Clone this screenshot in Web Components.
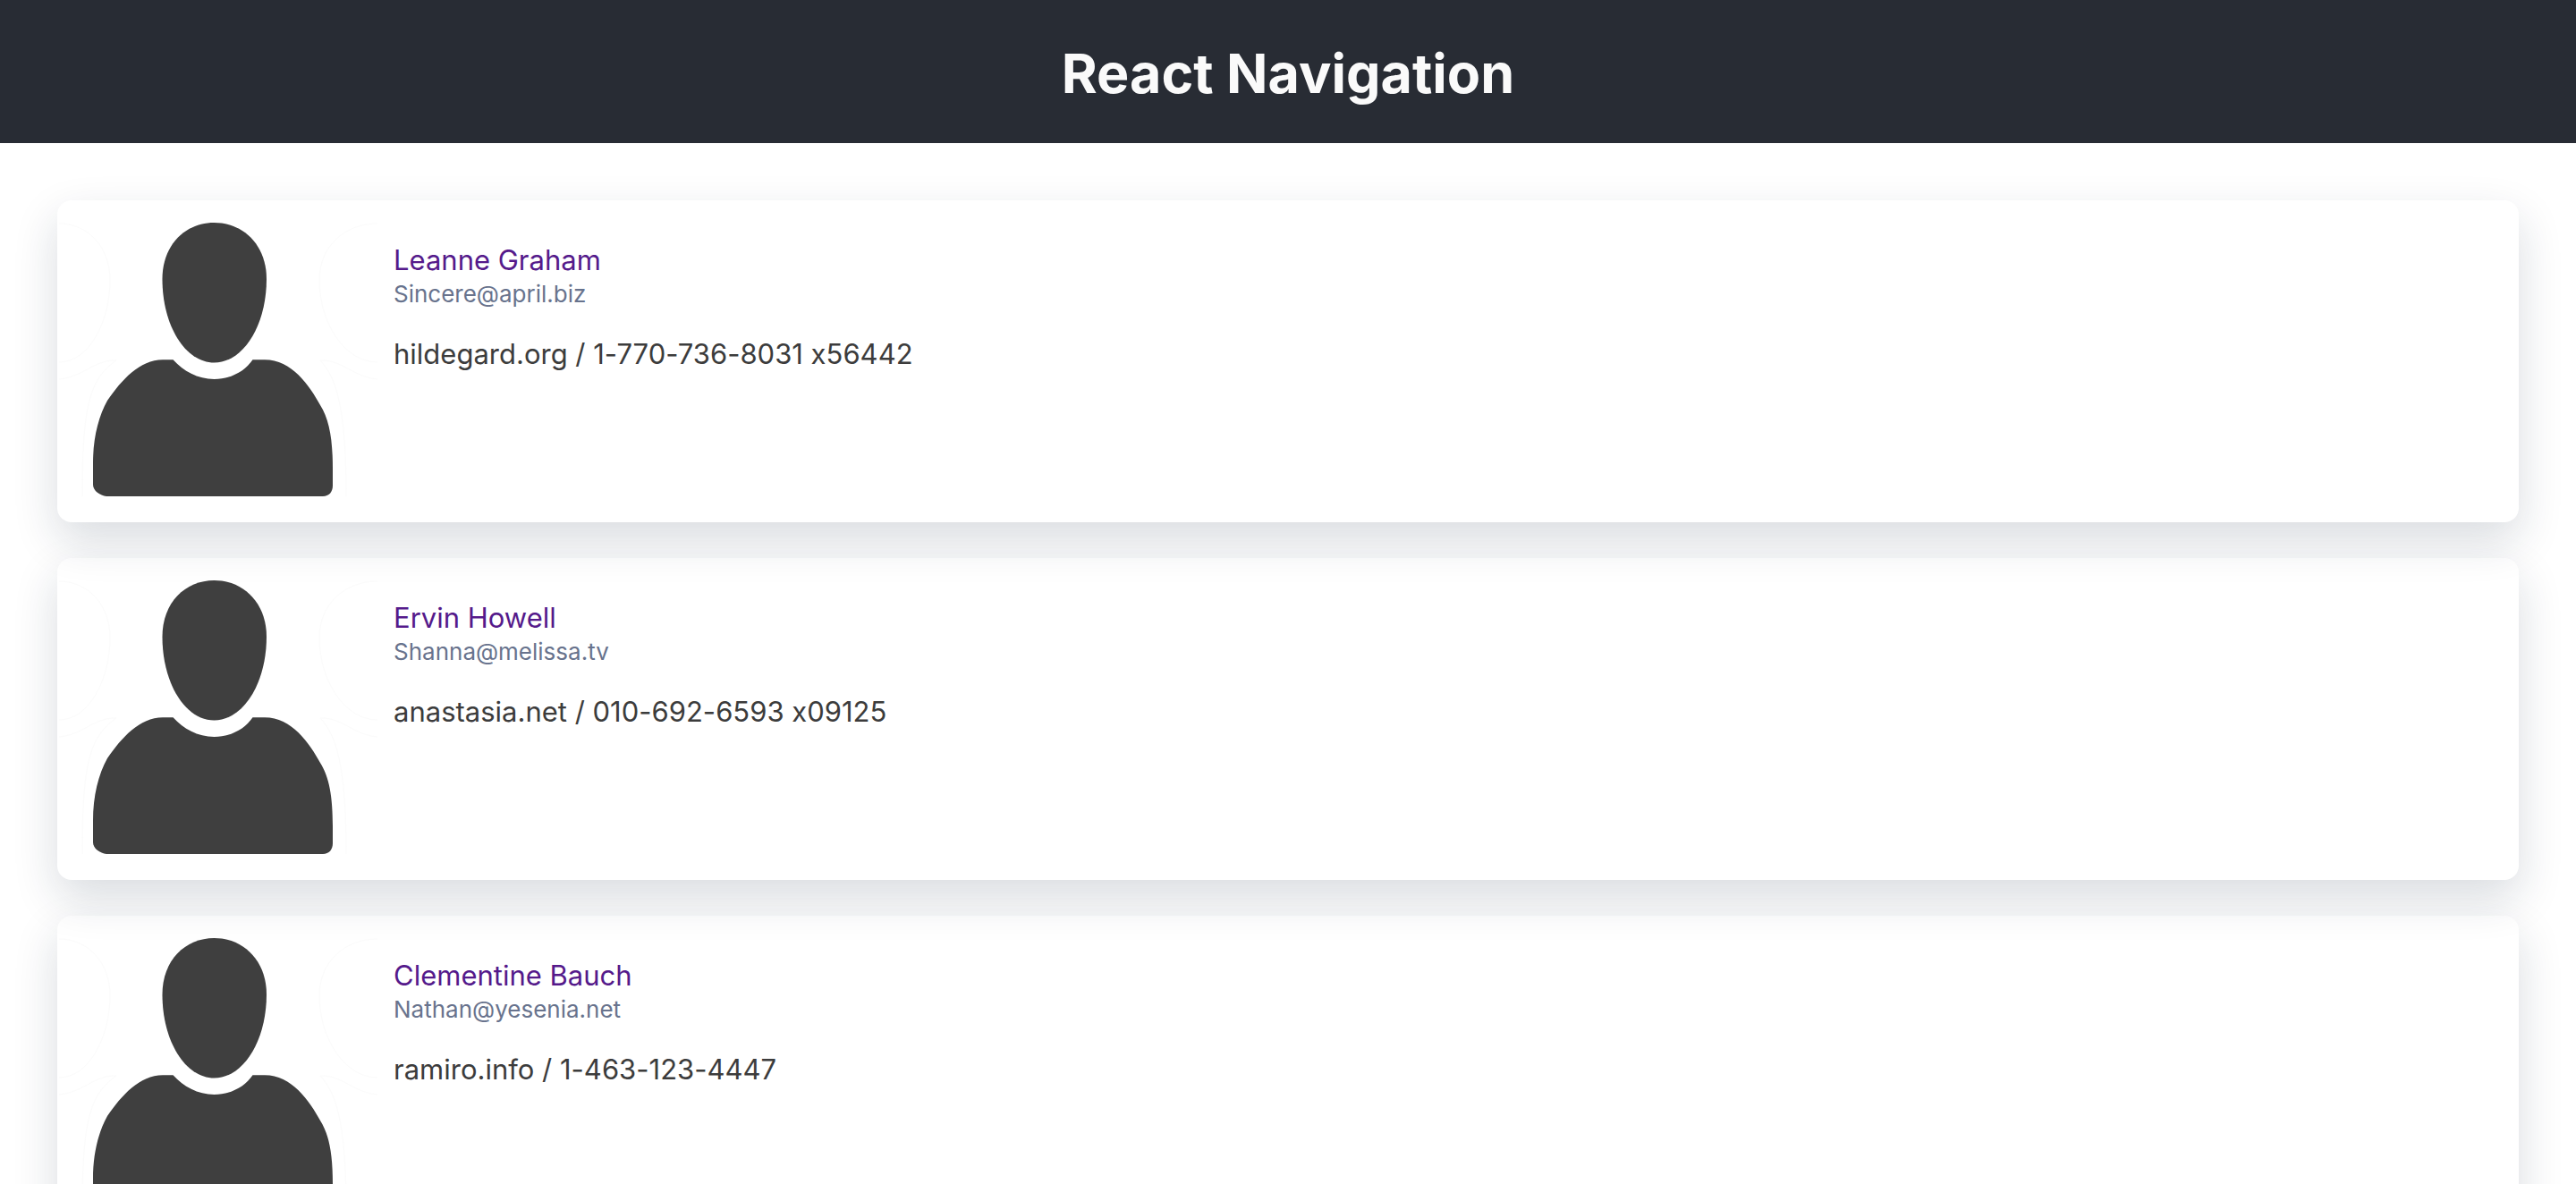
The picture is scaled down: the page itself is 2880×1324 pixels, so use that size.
<!DOCTYPE html>
<html lang="en">
<head>
<meta charset="utf-8">
<title>React Navigation</title>
<style>
  body { margin: 0; background: #fff; color: #3c3c3c; font-family: Inter, "Liberation Sans", sans-serif; font-feature-settings: "calt" 0; }
</style>
</head>
<body>
<app-header>React Navigation</app-header>
<user-list>
  <user-card href="#/users/1">
    <span slot="name">Leanne Graham</span>
    <span slot="email">Sincere@april.biz</span>
    <span slot="contact">hildegard.org / 1-770-736-8031 x56442</span>
  </user-card>
  <user-card href="#/users/2">
    <span slot="name">Ervin Howell</span>
    <span slot="email">Shanna@melissa.tv</span>
    <span slot="contact">anastasia.net / 010-692-6593 x09125</span>
  </user-card>
  <user-card href="#/users/3">
    <span slot="name">Clementine Bauch</span>
    <span slot="email">Nathan@yesenia.net</span>
    <span slot="contact">ramiro.info / 1-463-123-4447</span>
  </user-card>
</user-list>
<script>
class AppHeader extends HTMLElement {
  constructor() {
    super();
    this.attachShadow({ mode: 'open' }).innerHTML = `
      <style>
        :host { display: block; }
        header { background: #282c34; color: #fafafa; padding: 34px 32px 30px; text-align: center; }
        h1 { margin: 0; font-size: 61px; line-height: 96px; font-weight: 700; }
      </style>
      <header><h1><slot></slot></h1></header>`;
  }
}

class UserList extends HTMLElement {
  constructor() {
    super();
    this.attachShadow({ mode: 'open' }).innerHTML = `
      <style>
        :host { display: block; }
        main { display: flex; flex-direction: column; gap: 40px; padding: 64px; }
      </style>
      <main><slot></slot></main>`;
  }
}

class UserAvatar extends HTMLElement {
  constructor() {
    super();
    this.attachShadow({ mode: 'open' }).innerHTML = `
      <style>
        :host { display: block; flex: none; width: 360px; }
        svg { display: block; width: 100%; }
      </style>
      <svg viewBox="0 0 360 360" aria-hidden="true">
        <g fill="none" stroke="#fbfbfb" stroke-width="1">
          <path d="M2 26C35 26 59 53 59 89C59 135 36 181 2 181M358 26C320 26 293 53 293 89C293 135 320 181 358 181"/>
          <path d="M2 200C28 198 42 178 66 179C36 200 28 230 28 331M358 200C332 198 318 178 294 179C314 200 323 240 323 331"/>
        </g>
        <g fill="#3f3f3f">
          <path d="M175.500 25C208 25 234 50 234 88C234 140 208 181.500 175.500 181.500C143 181.500 117.500 140 117.500 88C117.500 50 143 25 175.500 25Z"/>
          <path d="M129.500 178.300C141 191 157 200 175.500 200C194 200 210 191 218.500 178.300H232C262 178.300 282 207 294 229C304 245 308 266 308 300V319C308 326 304 331 297 331H55C48 330 40 325 40 318V294C40 266 46 242 56 224C72 201 92 178.300 118 178.300Z"/>
        </g>
      </svg>`;
  }
}

class UserCard extends HTMLElement {
  constructor() {
    super();
    this.attachShadow({ mode: 'open' }).innerHTML = `
      <style>
        :host { display: block; }
        article { display: flex; border-radius: 16px; box-shadow: 0 20px 50px rgba(18, 38, 63, .16); }
        .info { flex: 1; padding: 48px 16px 0; }
        p { margin: 0; }
        a { color: #551a8b; text-decoration: none; }
        .name { font-size: 31px; line-height: 38px; }
        .email { font-size: 26px; line-height: 38px; color: #68738d; }
        .contact { margin-top: 24px; font-size: 31px; line-height: 48px; }
      </style>
      <article>
        <user-avatar></user-avatar>
        <div class="info">
          <p class="name"><a><slot name="name"></slot></a></p>
          <p class="email"><slot name="email"></slot></p>
          <p class="contact"><slot name="contact"></slot></p>
        </div>
      </article>`;
  }
  connectedCallback() {
    this.shadowRoot.querySelector('a').setAttribute('href', this.getAttribute('href'));
  }
}

customElements.define('app-header', AppHeader);
customElements.define('user-list', UserList);
customElements.define('user-avatar', UserAvatar);
customElements.define('user-card', UserCard);
</script>
</body>
</html>
